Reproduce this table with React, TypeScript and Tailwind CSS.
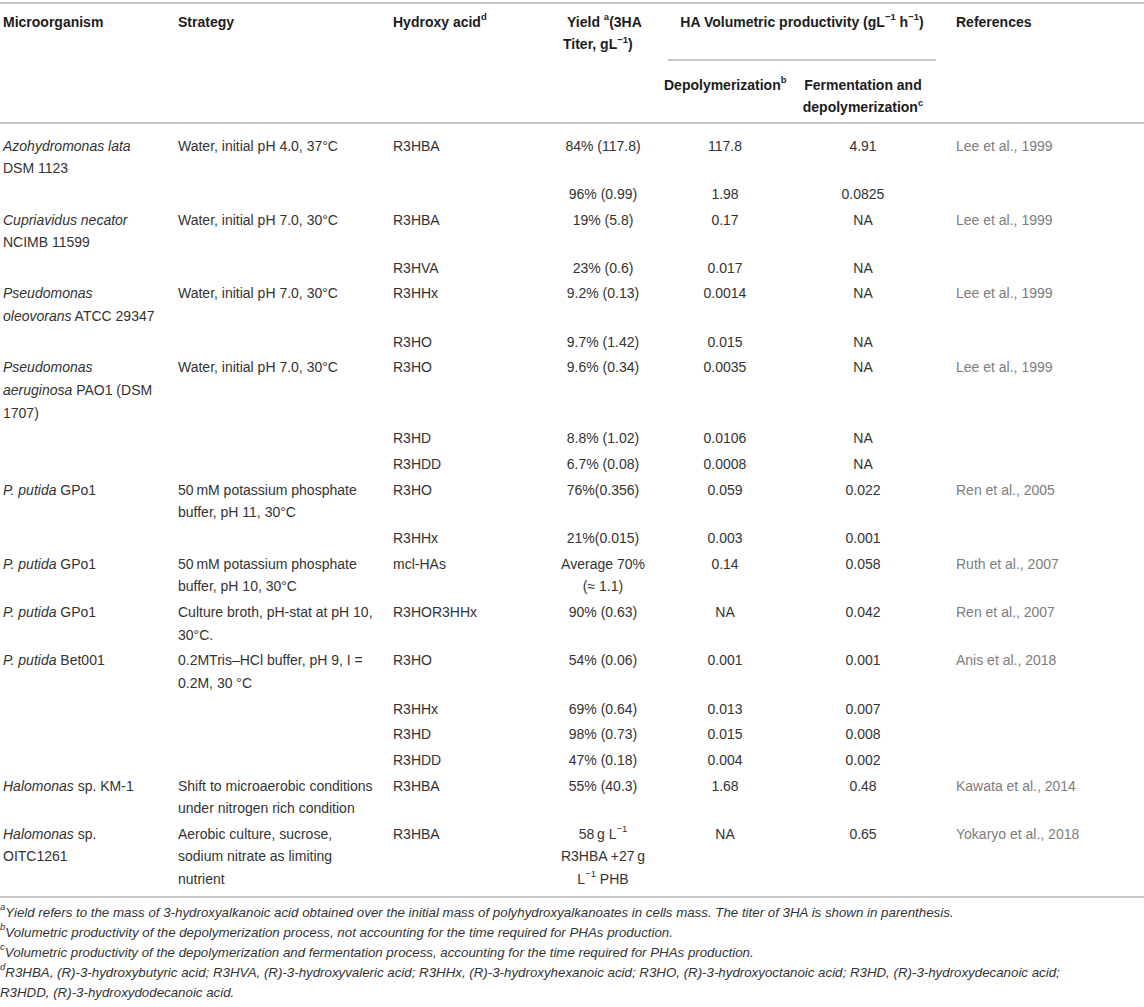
import type { ReactNode } from "react";

const cols = "grid grid-cols-[175px_215px_152px_122px_122px_154px_204px]";

type RowData = {
  org?: ReactNode[];
  strat?: ReactNode[];
  acid: string;
  yld: ReactNode[];
  dep: string;
  fer: string;
  refs?: string;
};

function I({ children }: { children: ReactNode }) {
  return <span className="italic">{children}</span>;
}

function Sup({ children }: { children: ReactNode }) {
  return <sup className="relative top-[-1px] align-super text-[9.5px] leading-none">{children}</sup>;
}

const rows: RowData[] = [
  {
    org: [<I>Azohydromonas lata</I>, "DSM 1123"],
    strat: ["Water, initial pH 4.0, 37°C"],
    acid: "R3HBA",
    yld: ["84% (117.8)"],
    dep: "117.8",
    fer: "4.91",
    refs: "Lee et al., 1999"
  },
  { acid: "", yld: ["96% (0.99)"], dep: "1.98", fer: "0.0825" },
  {
    org: [<I>Cupriavidus necator</I>, "NCIMB 11599"],
    strat: ["Water, initial pH 7.0, 30°C"],
    acid: "R3HBA",
    yld: ["19% (5.8)"],
    dep: "0.17",
    fer: "NA",
    refs: "Lee et al., 1999"
  },
  { acid: "R3HVA", yld: ["23% (0.6)"], dep: "0.017", fer: "NA" },
  {
    org: [
      <I>Pseudomonas</I>,
      <>
        <I>oleovorans</I> ATCC 29347
      </>
    ],
    strat: ["Water, initial pH 7.0, 30°C"],
    acid: "R3HHx",
    yld: ["9.2% (0.13)"],
    dep: "0.0014",
    fer: "NA",
    refs: "Lee et al., 1999"
  },
  { acid: "R3HO", yld: ["9.7% (1.42)"], dep: "0.015", fer: "NA" },
  {
    org: [
      <I>Pseudomonas</I>,
      <>
        <I>aeruginosa</I> PAO1 (DSM
      </>,
      "1707)"
    ],
    strat: ["Water, initial pH 7.0, 30°C"],
    acid: "R3HO",
    yld: ["9.6% (0.34)"],
    dep: "0.0035",
    fer: "NA",
    refs: "Lee et al., 1999"
  },
  { acid: "R3HD", yld: ["8.8% (1.02)"], dep: "0.0106", fer: "NA" },
  { acid: "R3HDD", yld: ["6.7% (0.08)"], dep: "0.0008", fer: "NA" },
  {
    org: [
      <>
        <I>P. putida</I> GPo1
      </>
    ],
    strat: ["50\u2009mM potassium phosphate", "buffer, pH 11, 30°C"],
    acid: "R3HO",
    yld: ["76%(0.356)"],
    dep: "0.059",
    fer: "0.022",
    refs: "Ren et al., 2005"
  },
  { acid: "R3HHx", yld: ["21%(0.015)"], dep: "0.003", fer: "0.001" },
  {
    org: [
      <>
        <I>P. putida</I> GPo1
      </>
    ],
    strat: ["50\u2009mM potassium phosphate", "buffer, pH 10, 30°C"],
    acid: "mcl-HAs",
    yld: ["Average 70%", "(≈ 1.1)"],
    dep: "0.14",
    fer: "0.058",
    refs: "Ruth et al., 2007"
  },
  {
    org: [
      <>
        <I>P. putida</I> GPo1
      </>
    ],
    strat: ["Culture broth, pH-stat at pH 10,", "30°C."],
    acid: "R3HOR3HHx",
    yld: ["90% (0.63)"],
    dep: "NA",
    fer: "0.042",
    refs: "Ren et al., 2007"
  },
  {
    org: [
      <>
        <I>P. putida</I> Bet001
      </>
    ],
    strat: ["0.2MTris–HCl buffer, pH 9, I =", "0.2M, 30 °C"],
    acid: "R3HO",
    yld: ["54% (0.06)"],
    dep: "0.001",
    fer: "0.001",
    refs: "Anis et al., 2018"
  },
  { acid: "R3HHx", yld: ["69% (0.64)"], dep: "0.013", fer: "0.007" },
  { acid: "R3HD", yld: ["98% (0.73)"], dep: "0.015", fer: "0.008" },
  { acid: "R3HDD", yld: ["47% (0.18)"], dep: "0.004", fer: "0.002" },
  {
    org: [
      <>
        <I>Halomonas</I> sp. KM-1
      </>
    ],
    strat: ["Shift to microaerobic conditions", "under nitrogen rich condition"],
    acid: "R3HBA",
    yld: ["55% (40.3)"],
    dep: "1.68",
    fer: "0.48",
    refs: "Kawata et al., 2014"
  },
  {
    org: [
      <>
        <I>Halomonas</I> sp.
      </>,
      "OITC1261"
    ],
    strat: ["Aerobic culture, sucrose,", "sodium nitrate as limiting", "nutrient"],
    acid: "R3HBA",
    yld: [
      <>
        58{"\u2009"}g L<Sup>−1</Sup>
      </>,
      <>R3HBA +27{"\u2009"}g</>,
      <>
        L<Sup>−1</Sup> PHB
      </>
    ],
    dep: "NA",
    fer: "0.65",
    refs: "Yokaryo et al., 2018"
  }
];

function Lines({ items }: { items?: ReactNode[] }) {
  if (!items) return null;
  return (
    <>
      {items.map((item, index) => (
        <div key={index} className="whitespace-nowrap">
          {item}
        </div>
      ))}
    </>
  );
}

function Rule() {
  return <div className="h-[2px] bg-[#c6c6c6]" />;
}

export default function App() {
  return (
    <div className="min-h-[1007px] bg-white font-['Liberation_Sans',Arial,sans-serif] text-[14px] leading-[22.6px] text-[#333]">
      <div className="pt-[2px]">
        <Rule />
      </div>

      <div className={`${cols} grid-rows-[57px_61px] font-bold text-[#1c1c1c]`}>
        <div className="row-span-2 pl-[3px] pt-[6.7px]">Microorganism</div>
        <div className="row-span-2 pl-[3px] pt-[6.7px]">Strategy</div>
        <div className="row-span-2 pl-[3px] pt-[6.7px]">
          Hydroxy acid<Sup>d</Sup>
        </div>
        <div className="row-span-2 pt-[6.7px] whitespace-nowrap">
          <div className="pl-[25px]">
            Yield <Sup>a</Sup>(3HA
          </div>
          <div className="pl-[21px]">
            Titer, gL<Sup>−1</Sup>)
          </div>
        </div>
        <div className="col-span-2 px-[4px]">
          <div className="flex h-full flex-col border-b-2 border-[#c6c6c6] pt-[6.7px]">
            <div className="text-center">
              HA Volumetric productivity (gL<Sup>−1</Sup> h<Sup>−1</Sup>)
            </div>
          </div>
        </div>
        <div className="row-span-2 pl-[16px] pt-[6.7px]">References</div>
        <div className="pt-[12.7px] text-center">
          Depolymerization<Sup>b</Sup>
        </div>
        <div className="pt-[12.7px] text-center">
          <div>Fermentation and</div>
          <div>
            depolymerization<Sup>c</Sup>
          </div>
        </div>
      </div>

      <Rule />

      <div className="pt-[9px] pb-[3.5px]">
        {rows.map((row, index) => (
          <div key={index} className={`${cols} py-[1.55px]`}>
            <div className="pl-[3px]">
              <Lines items={row.org} />
            </div>
            <div className="pl-[3px]">
              <Lines items={row.strat} />
            </div>
            <div className="pl-[3px]">{row.acid}</div>
            <div className="text-center">
              <Lines items={row.yld} />
            </div>
            <div className="text-center">{row.dep}</div>
            <div className="text-center">{row.fer}</div>
            <div className="pl-[16px] text-[#7d7d7d]">{row.refs}</div>
          </div>
        ))}
      </div>

      <Rule />

      <div className="pt-[5px] text-[13.3px] leading-[20px] italic text-[#333]">
        <p>
          <Sup>a</Sup>Yield refers to the mass of 3-hydroxyalkanoic acid obtained over the initial mass of
          polyhydroxyalkanoates in cells mass. The titer of 3HA is shown in parenthesis.
        </p>
        <p>
          <Sup>b</Sup>Volumetric productivity of the depolymerization process, not accounting for the time required for
          PHAs production.
        </p>
        <p>
          <Sup>c</Sup>Volumetric productivity of the depolymerization and fermentation process, accounting for the time
          required for PHAs production.
        </p>
        <p>
          <Sup>d</Sup>R3HBA, (R)-3-hydroxybutyric acid; R3HVA, (R)-3-hydroxyvaleric acid; R3HHx, (R)-3-hydroxyhexanoic
          acid; R3HO, (R)-3-hydroxyoctanoic acid; R3HD, (R)-3-hydroxydecanoic acid;
          <br />
          R3HDD, (R)-3-hydroxydodecanoic acid.
        </p>
      </div>
    </div>
  );
}
